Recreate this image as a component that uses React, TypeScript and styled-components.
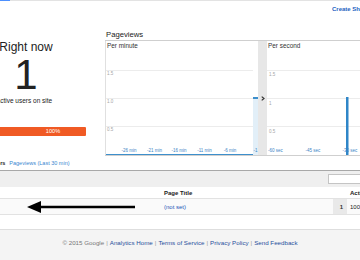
import styled, { createGlobalStyle } from "styled-components";

const GlobalStyle = createGlobalStyle`
  html, body {
    margin: 0;
    padding: 0;
    background: #fff;
  }
  body {
    font-family: "Liberation Sans", Arial, sans-serif;
    overflow: hidden;
  }
  #root {
    width: 360px;
    height: 260px;
    overflow: hidden;
  }
`;

const Page = styled.div`
  width: 360px;
  height: 260px;
  overflow: hidden;
  display: flex;
  flex-direction: column;
`;

const LoadBar = styled.div`
  flex: none;
  height: 1px;
  background: #e3e3e3;
`;

const LoadFill = styled.div`
  width: 10px;
  height: 100%;
  background: #4d90fe;
`;

const TopRow = styled.div`
  flex: none;
  height: 28px;
  box-sizing: border-box;
  padding-top: 4px;
  display: flex;
  justify-content: flex-end;
  align-items: flex-start;
`;

const CreateLink = styled.a`
  font-size: 6px;
  line-height: 8px;
  font-weight: bold;
  color: #1d5fbf;
  text-decoration: none;
  white-space: nowrap;
  margin-right: -17px;
`;

const Main = styled.div`
  flex: none;
  display: flex;
  align-items: flex-start;
`;

const Summary = styled.div`
  flex: none;
  width: 120px;
  margin-left: -34px;
  margin-right: 19px;
  padding-top: 11px;
  display: flex;
  flex-direction: column;
  align-items: center;
  color: #222;
`;

const RightNow = styled.div`
  font-size: 12px;
  line-height: 14px;
`;

const BigCount = styled.div`
  font-size: 42px;
  line-height: 36px;
  margin-top: 3px;
`;

const ActiveLabel = styled.div`
  font-size: 6.5px;
  line-height: 8px;
  margin-top: 4px;
  margin-right: 4px;
`;

const DeviceBar = styled.div`
  align-self: stretch;
  margin-top: 22px;
  height: 9px;
  box-sizing: border-box;
  padding-left: 54px;
  background: #f05a24;
  border-radius: 0 1px 1px 0;
  color: #fff;
  font-size: 5.6px;
  line-height: 9px;
  text-align: center;
`;

const Pageviews = styled.div`
  flex: none;
  width: 300px;
`;

const PanelTitle = styled.div`
  font-size: 7.7px;
  line-height: 11px;
  color: #222;
  padding-left: 1px;
`;

const Charts = styled.div`
  display: flex;
  border-top: 1px solid #cfcfcf;
  border-bottom: 1px solid #cfcfcf;
  height: 114px;
`;

const ChartPanel = styled.div<{ $width: number; $border?: boolean }>`
  flex: none;
  width: ${p => p.$width}px;
  box-sizing: border-box;
  border-left: ${p => (p.$border ? "1px solid #e0e0e0" : "none")};
  display: flex;
  flex-direction: column;
`;

const ChartLabel = styled.div`
  font-size: 6.4px;
  line-height: 8px;
  padding: 1px 0 0 1px;
  color: #333;
`;

const Gutter = styled.div`
  flex: none;
  width: 9px;
  background: #e7e7e7;
  display: flex;
  justify-content: center;
  padding-top: 55px;
  box-sizing: border-box;
`;

const Tabs = styled.div`
  flex: none;
  height: 14px;
  display: flex;
  align-items: center;
  gap: 4px;
  margin-left: -28px;
  font-size: 5.5px;
  white-space: nowrap;
`;

const TabCurrent = styled.span`
  font-weight: bold;
  color: #222;
`;

const TabLink = styled.a`
  color: #3a87d0;
  text-decoration: none;
`;

const Table = styled.div`
  flex: none;
  position: relative;
  border-top: 1px solid #a8a8a8;
`;

const Toolbar = styled.div`
  height: 16px;
  box-sizing: border-box;
  padding-top: 3px;
  background: #efefef;
  display: flex;
  justify-content: flex-end;
  align-items: flex-start;
`;

const Search = styled.input`
  width: 42px;
  height: 10px;
  box-sizing: border-box;
  margin: 0 -10px 0 0;
  padding: 0;
  border: 1px solid #c4c4c4;
  background: #fff;
`;

const Row = styled.div<{ $head?: boolean }>`
  display: grid;
  grid-template-columns: 161px 172px 14px 80px;
  height: ${p => (p.$head ? 12 : 16)}px;
  box-sizing: border-box;
  border-bottom: 1px solid #e2e2e2;
  background: ${p => (p.$head ? "#fff" : "#fafafa")};
  font-size: 6px;
  font-weight: ${p => (p.$head ? "bold" : "normal")};
  color: #222;
  white-space: nowrap;
`;

const Cell = styled.div<{ $shade?: boolean; $right?: boolean }>`
  display: flex;
  align-items: center;
  justify-content: ${p => (p.$right ? "flex-end" : "flex-start")};
  padding: 0 ${p => (p.$right ? "4px" : "0")} 0 3px;
  background: ${p => (p.$shade ? "#e9e9e9" : "transparent")};
  overflow: hidden;
`;

const PageTitleLink = styled.a`
  color: #2356b8;
  text-decoration: none;
`;

const Count = styled.span`
  font-weight: bold;
  color: #333;
`;

const Spacer = styled.div`
  height: 14px;
`;

const Pointer = styled.svg`
  position: absolute;
  left: 27px;
  top: 29px;
`;

const Footer = styled.div`
  flex: 1;
  border-top: 1px solid #dedede;
  background: #f4f4f4;
  display: flex;
  justify-content: center;
  padding-top: 9px;
  font-size: 6.2px;
  line-height: 8px;
  color: #777;
  white-space: nowrap;
`;

const FooterLink = styled.a`
  color: #1f4f9c;
  text-decoration: none;
`;

const Sep = styled.span`
  color: #999;
  padding: 0 2px;
`;

const minuteTicks = [
  { x: 23, t: "-26 min" },
  { x: 48.5, t: "-21 min" },
  { x: 73, t: "-16 min" },
  { x: 98.5, t: "-11 min" },
  { x: 124, t: "-6 min" },
  { x: 149.5, t: "-1" },
];

const secondTicks = [
  { x: 8.5, t: "-60 sec" },
  { x: 46, t: "-45 sec" },
  { x: 83, t: "-30 sec" },
];

function MinuteChart() {
  return (
    <svg width="152" height="105" viewBox="0 0 152 105">
      {[20, 48, 76].map(y => (
        <line key={y} x1="0" x2="147" y1={y + 0.5} y2={y + 0.5} stroke="#ececec" strokeWidth="1" />
      ))}
      <g fontSize="4.5" fill="#a5a5a5" fontFamily="Liberation Sans, Arial, sans-serif">
        <text x="1" y="25">1.5</text>
        <text x="1" y="53">1.0</text>
        <text x="1" y="81">0.5</text>
      </g>
      <rect x="147" y="47" width="5" height="58" fill="#e2eff8" />
      <rect x="147" y="47" width="5" height="2" fill="#3d8fcc" />
      <line x1="0" x2="147" y1="104.5" y2="104.5" stroke="#3d8fcc" strokeWidth="1" />
      <g fontSize="4.5" fill="#3d85c6" textAnchor="middle" fontFamily="Liberation Sans, Arial, sans-serif">
        {minuteTicks.map(k => (
          <text key={k.t} x={k.x} y="101.5">{k.t}</text>
        ))}
      </g>
    </svg>
  );
}

function SecondChart() {
  return (
    <svg width="160" height="105" viewBox="0 0 160 105">
      {[20, 48, 76].map(y => (
        <line key={y} x1="0" x2="160" y1={y + 0.5} y2={y + 0.5} stroke="#ececec" strokeWidth="1" />
      ))}
      <g fontSize="4.5" fill="#a5a5a5" fontFamily="Liberation Sans, Arial, sans-serif">
        <text x="2" y="26">1.5</text>
        <text x="2" y="55">1</text>
        <text x="2" y="83">0.5</text>
      </g>
      <rect x="79" y="47" width="2.5" height="58" fill="#2f86c8" />
      <g fontSize="4.5" fill="#3d85c6" textAnchor="middle" fontFamily="Liberation Sans, Arial, sans-serif">
        {secondTicks.map(k => (
          <text key={k.t} x={k.x} y="101.5">{k.t}</text>
        ))}
      </g>
    </svg>
  );
}

export default function App() {
  return (
    <>
      <GlobalStyle />
      <Page>
        <LoadBar>
          <LoadFill />
        </LoadBar>
        <TopRow>
          <CreateLink href="#">Create Shortcut</CreateLink>
        </TopRow>

        <Main>
          <Summary>
            <RightNow>Right now</RightNow>
            <BigCount>1</BigCount>
            <ActiveLabel>Active users on site</ActiveLabel>
            <DeviceBar>100%</DeviceBar>
          </Summary>

          <Pageviews>
            <PanelTitle>Pageviews</PanelTitle>
            <Charts>
              <ChartPanel $width={153} $border>
                <ChartLabel>Per minute</ChartLabel>
                <MinuteChart />
              </ChartPanel>
              <Gutter>
                <svg width="4" height="5" viewBox="0 0 4 5">
                  <polyline points="0.7,0.6 3,2.5 0.7,4.4" fill="none" stroke="#333" strokeWidth="1.2" />
                </svg>
              </Gutter>
              <ChartPanel $width={160}>
                <ChartLabel>Per second</ChartLabel>
                <SecondChart />
              </ChartPanel>
            </Charts>
          </Pageviews>
        </Main>

        <Tabs>
          <TabCurrent>Active Users</TabCurrent>
          <TabLink href="#">Pageviews (Last 30 min)</TabLink>
        </Tabs>

        <Table>
          <Toolbar>
            <Search type="text" />
          </Toolbar>
          <Row $head>
            <Cell />
            <Cell>Page Title</Cell>
            <Cell />
            <Cell>Active Users</Cell>
          </Row>
          <Row>
            <Cell />
            <Cell>
              <PageTitleLink href="#">(not set)</PageTitleLink>
            </Cell>
            <Cell $shade $right>
              <Count>1</Count>
            </Cell>
            <Cell>100.00%</Cell>
          </Row>
          <Spacer />
          <Pointer width="110" height="14" viewBox="0 0 110 14">
            <line x1="12" y1="7" x2="108" y2="7" stroke="#000" strokeWidth="2.6" />
            <polygon points="0,7 14,1 14,13" fill="#000" />
          </Pointer>
        </Table>

        <Footer>
          <span>© 2015 Google</span>
          <Sep>|</Sep>
          <FooterLink href="#">Analytics Home</FooterLink>
          <Sep>|</Sep>
          <FooterLink href="#">Terms of Service</FooterLink>
          <Sep>|</Sep>
          <FooterLink href="#">Privacy Policy</FooterLink>
          <Sep>|</Sep>
          <FooterLink href="#">Send Feedback</FooterLink>
        </Footer>
      </Page>
    </>
  );
}
